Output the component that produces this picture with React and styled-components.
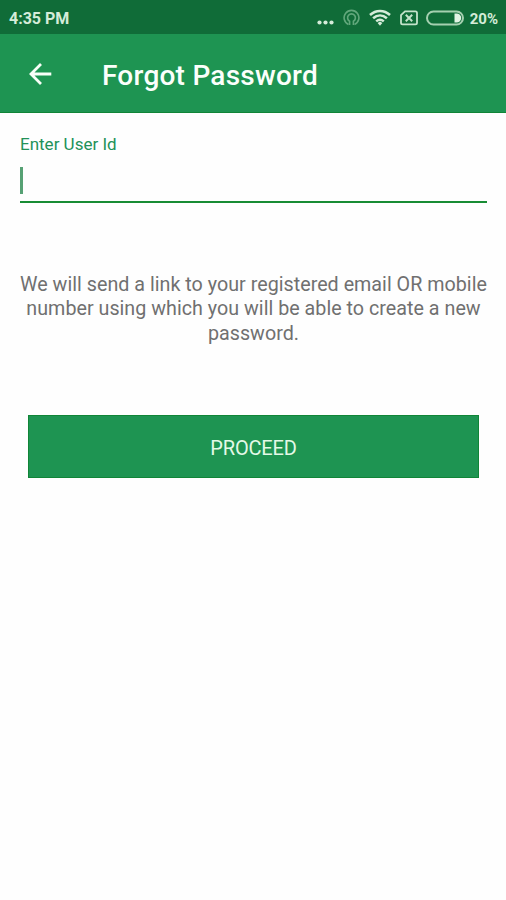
import React from "react";
import styled, { createGlobalStyle } from "styled-components";

const GlobalStyle = createGlobalStyle`
  * { box-sizing: border-box; }
  body { margin: 0; background: #fefefe; font-family: Roboto, sans-serif; }
`;

const Screen = styled.div`
  display: flex;
  flex-direction: column;
  width: 506px;
  height: 900px;
  overflow: hidden;
  background: #fefefe;
`;

const StatusBar = styled.div`
  display: flex;
  align-items: center;
  justify-content: space-between;
  flex: none;
  height: 34px;
  padding: 2px 8px 0 9px;
  background: #106c38;
  color: #d5ecd9;
`;

const StatusText = styled.span`
  padding-top: 1px;
  font-size: ${(p) => p.$size}px;
  line-height: 20px;
  font-weight: 700;
  white-space: nowrap;
`;

const StatusIcons = styled.div`
  display: flex;
  align-items: center;
`;

const StatusIcon = styled.svg`
  display: block;
  flex: none;
  margin-right: ${(p) => p.$gap}px;
`;

const AppBar = styled.header`
  display: flex;
  align-items: center;
  flex: none;
  height: 79px;
  padding: 4px 28px 0;
  background: #1e9452;
  border-bottom: 1px solid #108537;
`;

const BackButton = styled.button`
  display: flex;
  padding: 0;
  margin: 0 50px 2px 0;
  border: 0;
  background: none;
`;

const Title = styled.h1`
  margin: 0;
  padding-top: 2px;
  color: #fbfffb;
  font-size: 28px;
  line-height: 36px;
  font-weight: 500;
  letter-spacing: 0.24px;
  white-space: nowrap;
`;

const Form = styled.main`
  display: flex;
  flex-direction: column;
  padding: 21px 19px 0 20px;
`;

const Label = styled.label`
  color: #229158;
  font-size: 17px;
  line-height: 20px;
`;

const Field = styled.div`
  display: flex;
  height: 49px;
  padding-top: 13px;
  border-bottom: 2px solid #188c34;
`;

const Caret = styled.span`
  width: 3px;
  height: 27px;
  background: #56a174;
`;

const Message = styled.p`
  margin: 69.5px -5px 0;
  color: #707070;
  font-size: 19.7px;
  line-height: 24.5px;
  letter-spacing: 0.02px;
  text-align: center;
`;

const Line = styled.span`
  display: block;
  white-space: nowrap;
`;

const Proceed = styled.button`
  height: 63px;
  margin: 68.5px 8px 0;
  padding: 3px 0 0;
  border: 1px solid #108537;
  background: #1e9452;
  color: #e4f9e7;
  font: 400 20px/24px Roboto, sans-serif;
  letter-spacing: -0.15px;
`;

export default function App() {
  return (
    <Screen>
      <GlobalStyle />
      <StatusBar>
        <StatusText $size={16}>4:35 PM</StatusText>
        <StatusIcons>
          <StatusIcon $gap={9} width="17" height="18" fill="#d5ecd9">
            <circle cx="2.5" cy="13.5" r="2.1" />
            <circle cx="8.5" cy="13.5" r="2.1" />
            <circle cx="14.5" cy="13.5" r="2.1" />
          </StatusIcon>
          <StatusIcon $gap={9} width="17" height="18" fill="none" stroke="#61a77b" strokeWidth="1.6">
            <path d="M5.5 15.5A7.4 7.4 0 1 1 11.5 15.5" />
            <path d="M6.6 16V12.2A3.9 3.9 0 1 1 10.4 12.2V16" />
          </StatusIcon>
          <StatusIcon $gap={9} width="22" height="18" fill="none" stroke="#d5ecd9" strokeWidth="2.5">
            <path d="M1 6C6.8.5 15.2.5 21 6M4.1 9.3c4.2-3.8 9.6-3.8 13.8 0M7.2 12.4c2.3-2 5.3-2 7.6 0" />
            <path d="M11 12.4l2.4 1.5L11 16.8l-2.4-2.9z" fill="#d5ecd9" stroke="none" />
          </StatusIcon>
          <StatusIcon $gap={8} width="18" height="16" fill="none" stroke="#c3e3ca" strokeWidth="1.8">
            <path d="M5 1.4h10.4q1.6 0 1.6 1.6v9.8q0 1.6-1.6 1.6H2.6Q1 14.4 1 12.8V5.2z" />
            <path d="M5.8 4.8l6.4 6.4M12.2 4.8l-6.4 6.4" strokeWidth="2" />
          </StatusIcon>
          <StatusIcon $gap={6} width="38" height="16" fill="none" stroke="#a5d0b0" strokeWidth="2">
            <rect x="1" y="1.5" width="36" height="13" rx="6.5" />
            <path d="M28.5 3.5h2.2a4.5 4.5 0 0 1 0 9h-2.2z" fill="#e2f3e5" stroke="none" />
          </StatusIcon>
          <StatusText $size={15}>20%</StatusText>
        </StatusIcons>
      </StatusBar>
      <AppBar>
        <BackButton aria-label="Back">
          <svg width="24" height="24" fill="none" stroke="#f8fff8" strokeWidth="2.8">
            <path d="M23.3 12H3.5M13 2L3 12l10 10" />
          </svg>
        </BackButton>
        <Title>Forgot Password</Title>
      </AppBar>
      <Form>
        <Label>Enter User Id</Label>
        <Field><Caret /></Field>
        <Message>
          <Line>We will send a link to your registered email OR mobile</Line>
          <Line>number using which you will be able to create a new</Line>
          <Line>password.</Line>
        </Message>
        <Proceed>PROCEED</Proceed>
      </Form>
    </Screen>
  );
}
